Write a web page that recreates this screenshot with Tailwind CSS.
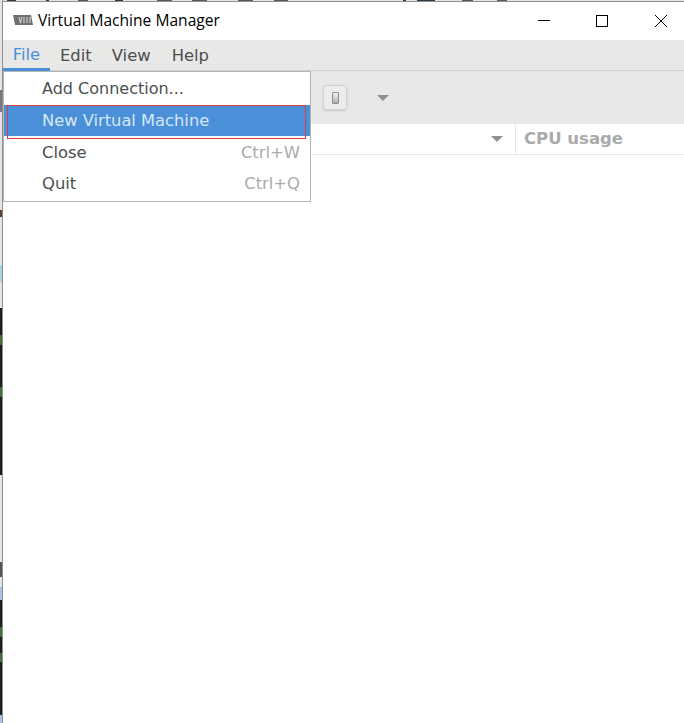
<!DOCTYPE html>
<html lang="en">
  <head>
    <meta charset="UTF-8" />
    <title>Virtual Machine Manager</title>
    <script src="https://cdn.jsdelivr.net/npm/@tailwindcss/browser@4"></script>
  </head>
  <body class="bg-white h-[723px] w-[684px] overflow-hidden font-['DejaVu_Sans',sans-serif]">
    <div class="flex h-[723px]">
      <!-- desktop showing behind the window -->
      <div class="w-[2px] shrink-0 flex flex-col bg-[#e4e4e4]">
        <div class="h-[90px]"></div>
        <div class="h-[22px] bg-[#77797c]"></div>
        <div class="h-[98px]"></div>
        <div class="h-[7px] bg-[#5a4030]"></div>
        <div class="h-[48px]"></div>
        <div class="h-[17px] bg-[#a8d4dc]"></div>
        <div class="h-[26px]"></div>
        <div class="h-[27px] bg-[#1e1e1e]"></div>
        <div class="h-[10px] bg-[#44703a]"></div>
        <div class="h-[42px] bg-[#1e1e1e]"></div>
        <div class="h-[10px] bg-[#44703a]"></div>
        <div class="h-[78px] bg-[#1e1e1e]"></div>
        <div class="h-[87px]"></div>
        <div class="h-[15px] bg-[#555555]"></div>
        <div class="h-[10px]"></div>
        <div class="h-[13px] bg-[#a9c4e4]"></div>
        <div class="h-[27px] bg-[#1e1e1e]"></div>
        <div class="h-[10px] bg-[#44703a]"></div>
        <div class="h-[16px] bg-[#1e1e1e]"></div>
        <div class="h-[9px] bg-[#44703a]"></div>
        <div class="h-[53px] bg-[#1e1e1e]"></div>
        <div class="h-[8px] bg-[#a9c4e4]"></div>
      </div>
      <div class="relative flex-1 min-w-0 border-l border-[#8f8f8f] flex flex-col">
        <!-- sliver of the window behind -->
        <div class="h-[1px] flex bg-[#e4e4e4]">
          <div class="ml-[4px] w-[9px] bg-[#2e3a44]"></div>
          <div class="ml-[30px] w-[3px] bg-[#2e3a44]"></div>
          <div class="ml-[29px] w-[10px] bg-[#55585c]"></div>
          <div class="ml-[27px] w-[8px] bg-[#2e3a44]"></div>
          <div class="ml-[34px] w-[15px] bg-[#55585c]"></div>
          <div class="ml-[20px] w-[15px] bg-[#55585c]"></div>
          <div class="ml-[31px] w-[15px] bg-[#55585c]"></div>
          <div class="ml-[21px] w-[14px] bg-[#55585c]"></div>
          <div class="ml-[115px] w-[3px] bg-[#2e3a44]"></div>
          <div class="ml-[11px] w-[18px] bg-[#2e3a44]"></div>
          <div class="ml-[27px] w-[11px] bg-[#55585c]"></div>
          <div class="ml-[24px] w-[10px] bg-[#55585c]"></div>
        </div>
        <div class="h-[1px] bg-[#8f8f8f]"></div>
        <!-- title bar -->
        <div class="h-[38px] bg-white flex items-center justify-between pl-[10px]">
          <div class="flex items-center gap-[5px]">
            <svg class="-mt-[2px]" width="20" height="10" viewBox="0 0 20 10">
              <path d="M0 0h18l2 10H2z" fill="#6f7070" />
              <path d="M6 2l1.5 6L9 2M11 8V2M14 8V2M17 8V2" fill="none" stroke="#c8c8c8" stroke-width="1.2" />
            </svg>
            <span class="text-[15.6px] text-black font-['Open_Sans',sans-serif]">Virtual Machine Manager</span>
          </div>
          <div class="flex items-center">
            <svg class="w-[58px] h-[38px]" viewBox="0 0 58 38"><path d="M28 18.5h12" stroke="#000" /></svg>
            <svg class="w-[58px] h-[38px]" viewBox="0 0 58 38"><rect x="28.5" y="13.5" width="11" height="11" fill="none" stroke="#000" /></svg>
            <svg class="w-[58px] h-[38px]" viewBox="0 0 58 38"><path d="M29 13l12 12M41 13l-12 12" stroke="#000" /></svg>
          </div>
        </div>
        <!-- menu bar -->
        <div class="h-[31px] bg-[#e8e8e7] border-b border-[#cfcfcd] flex text-[16.4px] text-[#4a4f50]">
          <div class="h-[31px] w-[47px] pt-[3px] flex items-center justify-center text-[#4a90d9] border-b-[3px] border-[#4a90d9]">File</div>
          <div class="h-[30px] px-[10px] pt-[3px] flex items-center">Edit</div>
          <div class="h-[30px] pl-[10px] pr-[11px] pt-[3px] flex items-center">View</div>
          <div class="h-[30px] px-[10px] pt-[3px] flex items-center">Help</div>
        </div>
        <!-- toolbar -->
        <div class="h-[53px] bg-[#e8e8e7] flex items-center pl-[320px] gap-[30px]">
          <div class="w-[24px] h-[25px] rounded-[3px] border border-[#d2d2d0] bg-[#ececeb] shadow-sm flex items-center justify-center">
            <div class="w-[7px] h-[12px] bg-gradient-to-b from-[#f2f2f2] to-[#b0b0b0] border border-[#8a8a8a] rounded-[1px]"></div>
          </div>
          <svg width="12" height="6" viewBox="0 0 12 6"><path d="M0 0h12L6 6z" fill="#8f9190" /></svg>
        </div>
        <!-- list header -->
        <div class="h-[31px] bg-white border-b border-[#e8e8e7] flex justify-end">
          <div class="w-[24px] flex items-center">
            <svg width="12" height="6" viewBox="0 0 12 6"><path d="M0 0h12L6 6z" fill="#8f9190" /></svg>
          </div>
          <div class="w-[169px] border-l border-[#e8e8e7] pl-[8px] flex items-center text-[16.5px] font-bold text-[#a9abab]">CPU usage</div>
        </div>
        <div class="flex-1 bg-white"></div>

        <!-- open File menu -->
        <div class="absolute left-0 top-[71px] w-[308px] h-[131px] bg-white border border-[#b4b4b3] py-[1px] text-[16.4px] text-[#4a4f50] flex flex-col">
          <div class="h-[32px] pl-[38px] flex items-center text-[16px]">Add Connection...</div>
          <div class="relative h-[31px] pl-[38px] pt-[1px] flex items-center bg-[#4a90d9] text-[#d6e6f7] text-[16.3px]">
            New Virtual Machine
            <div class="absolute left-[3px] right-[4px] top-0 h-[34px] border border-[#e5393f]"></div>
          </div>
          <div class="h-[32px] mt-[1px] pl-[38px] pr-[10px] flex items-center justify-between">
            <span>Close</span><span class="text-[#a9abab]">Ctrl+W</span>
          </div>
          <div class="h-[31px] pl-[38px] pr-[10px] flex items-center justify-between">
            <span>Quit</span><span class="text-[#a9abab]">Ctrl+Q</span>
          </div>
        </div>
      </div>
    </div>
  </body>
</html>
